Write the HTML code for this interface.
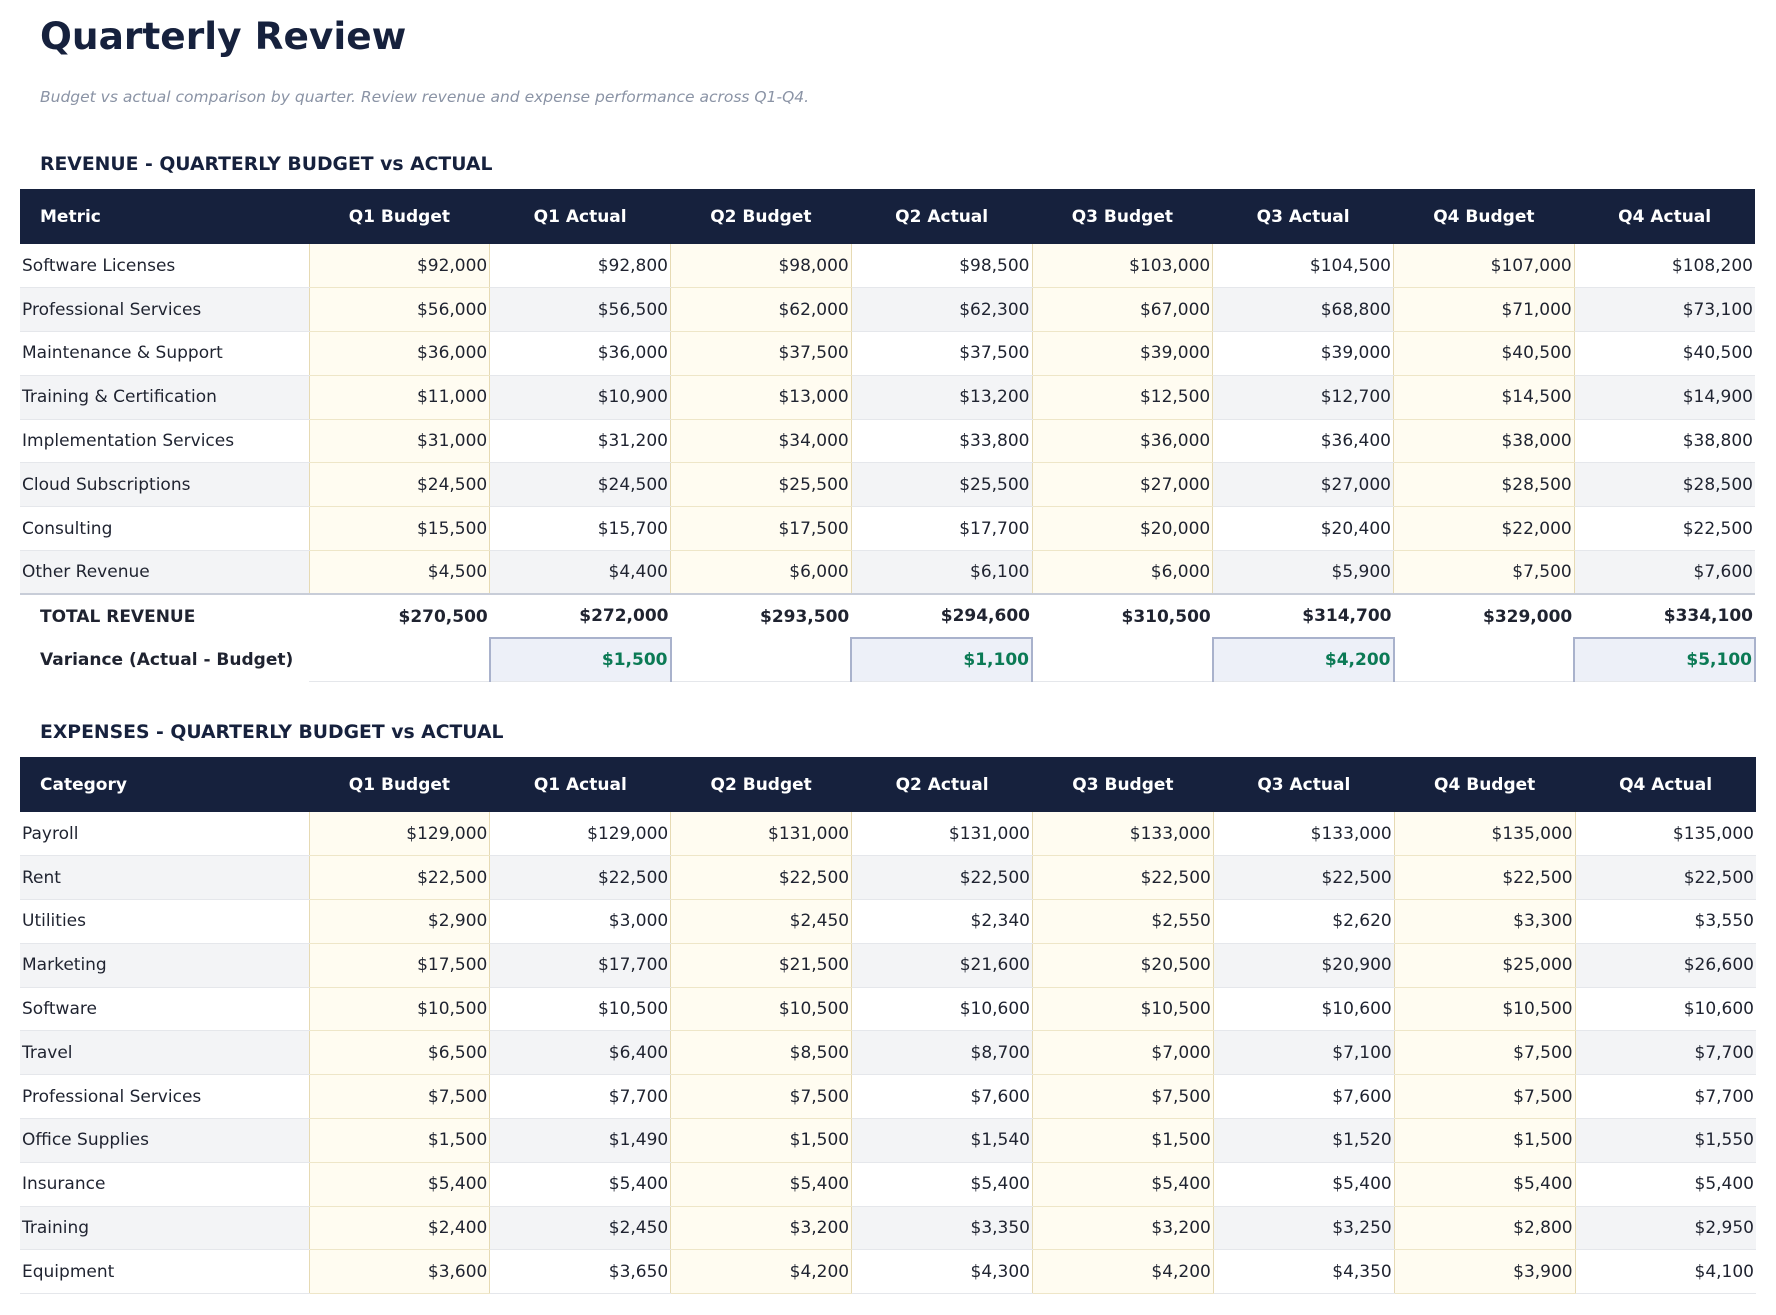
<!DOCTYPE html>
<html><head><meta charset="utf-8"><style>
*{box-sizing:border-box;margin:0;padding:0}
body{width:1776px;height:1315px;background:#fff;font-family:"DejaVu Sans","Liberation Sans",sans-serif;color:#1f2330;overflow:hidden}
h1{position:absolute;left:40px;top:11px;font-size:37.5px;font-weight:bold;color:#16213d;line-height:50px}
.sub{position:absolute;left:40px;top:88px;font-size:15.5px;font-style:italic;color:#8a93a5}
h2{position:absolute;left:40px;font-size:18.8px;font-weight:bold;color:#16213d;line-height:24px}
table{position:absolute;left:20px;width:1736px;border-collapse:collapse;table-layout:fixed;font-size:17px}
col.c0{width:289px}
th{background:#16213d;color:#fff;font-weight:bold;height:55px;text-align:center}
th:first-child{text-align:left;padding-left:20px}
td{height:43.8px;text-align:right;padding-right:2px;border-bottom:1px solid #e5e7eb;white-space:nowrap}
td:first-child{text-align:left;padding-left:2px}
tr.e td{background:#f3f4f6}
td.b{background:#fffcf1!important;border-left:1px solid #e6dab4;border-right:1px solid #e6dab4;border-bottom:1px solid #eee6c8}
tr.last td{border-bottom:2px solid #c8cdd8}
tr.tot td{font-weight:bold;border-bottom:none;background:#fff}
tr.tot td:first-child,tr.var td:first-child{padding-left:20px}
tr.var td{font-weight:bold;border-bottom:1px solid #e5e7eb}
td.v{background:#edf0f8;border:2px solid #a9b2cc;color:#0b7a55}
</style></head><body>
<h1>Quarterly Review</h1>
<div class="sub">Budget vs actual comparison by quarter. Review revenue and expense performance across Q1-Q4.</div>
<h2 style="top:153px">REVENUE - QUARTERLY BUDGET vs ACTUAL</h2>
<table style="top:189px">
<colgroup><col class="c0"><col><col><col><col><col><col><col><col></colgroup>
<tr><th>Metric</th><th>Q1 Budget</th><th>Q1 Actual</th><th>Q2 Budget</th><th>Q2 Actual</th><th>Q3 Budget</th><th>Q3 Actual</th><th>Q4 Budget</th><th>Q4 Actual</th></tr>
<tr><td>Software Licenses</td><td class="b">$92,000</td><td>$92,800</td><td class="b">$98,000</td><td>$98,500</td><td class="b">$103,000</td><td>$104,500</td><td class="b">$107,000</td><td>$108,200</td></tr>
<tr class="e"><td>Professional Services</td><td class="b">$56,000</td><td>$56,500</td><td class="b">$62,000</td><td>$62,300</td><td class="b">$67,000</td><td>$68,800</td><td class="b">$71,000</td><td>$73,100</td></tr>
<tr><td>Maintenance &amp; Support</td><td class="b">$36,000</td><td>$36,000</td><td class="b">$37,500</td><td>$37,500</td><td class="b">$39,000</td><td>$39,000</td><td class="b">$40,500</td><td>$40,500</td></tr>
<tr class="e"><td>Training &amp; Certification</td><td class="b">$11,000</td><td>$10,900</td><td class="b">$13,000</td><td>$13,200</td><td class="b">$12,500</td><td>$12,700</td><td class="b">$14,500</td><td>$14,900</td></tr>
<tr><td>Implementation Services</td><td class="b">$31,000</td><td>$31,200</td><td class="b">$34,000</td><td>$33,800</td><td class="b">$36,000</td><td>$36,400</td><td class="b">$38,000</td><td>$38,800</td></tr>
<tr class="e"><td>Cloud Subscriptions</td><td class="b">$24,500</td><td>$24,500</td><td class="b">$25,500</td><td>$25,500</td><td class="b">$27,000</td><td>$27,000</td><td class="b">$28,500</td><td>$28,500</td></tr>
<tr><td>Consulting</td><td class="b">$15,500</td><td>$15,700</td><td class="b">$17,500</td><td>$17,700</td><td class="b">$20,000</td><td>$20,400</td><td class="b">$22,000</td><td>$22,500</td></tr>
<tr class="e last"><td>Other Revenue</td><td class="b">$4,500</td><td>$4,400</td><td class="b">$6,000</td><td>$6,100</td><td class="b">$6,000</td><td>$5,900</td><td class="b">$7,500</td><td>$7,600</td></tr>
<tr class="tot"><td>TOTAL REVENUE</td><td>$270,500</td><td>$272,000</td><td>$293,500</td><td>$294,600</td><td>$310,500</td><td>$314,700</td><td>$329,000</td><td>$334,100</td></tr>
<tr class="var"><td style="border-bottom:none">Variance (Actual - Budget)</td><td></td><td class="v">$1,500</td><td></td><td class="v">$1,100</td><td></td><td class="v">$4,200</td><td></td><td class="v">$5,100</td></tr>
</table>
<h2 style="top:721px">EXPENSES - QUARTERLY BUDGET vs ACTUAL</h2>
<table style="top:757px">
<colgroup><col class="c0"><col><col><col><col><col><col><col><col></colgroup>
<tr><th>Category</th><th>Q1 Budget</th><th>Q1 Actual</th><th>Q2 Budget</th><th>Q2 Actual</th><th>Q3 Budget</th><th>Q3 Actual</th><th>Q4 Budget</th><th>Q4 Actual</th></tr>
<tr><td>Payroll</td><td class="b">$129,000</td><td>$129,000</td><td class="b">$131,000</td><td>$131,000</td><td class="b">$133,000</td><td>$133,000</td><td class="b">$135,000</td><td>$135,000</td></tr>
<tr class="e"><td>Rent</td><td class="b">$22,500</td><td>$22,500</td><td class="b">$22,500</td><td>$22,500</td><td class="b">$22,500</td><td>$22,500</td><td class="b">$22,500</td><td>$22,500</td></tr>
<tr><td>Utilities</td><td class="b">$2,900</td><td>$3,000</td><td class="b">$2,450</td><td>$2,340</td><td class="b">$2,550</td><td>$2,620</td><td class="b">$3,300</td><td>$3,550</td></tr>
<tr class="e"><td>Marketing</td><td class="b">$17,500</td><td>$17,700</td><td class="b">$21,500</td><td>$21,600</td><td class="b">$20,500</td><td>$20,900</td><td class="b">$25,000</td><td>$26,600</td></tr>
<tr><td>Software</td><td class="b">$10,500</td><td>$10,500</td><td class="b">$10,500</td><td>$10,600</td><td class="b">$10,500</td><td>$10,600</td><td class="b">$10,500</td><td>$10,600</td></tr>
<tr class="e"><td>Travel</td><td class="b">$6,500</td><td>$6,400</td><td class="b">$8,500</td><td>$8,700</td><td class="b">$7,000</td><td>$7,100</td><td class="b">$7,500</td><td>$7,700</td></tr>
<tr><td>Professional Services</td><td class="b">$7,500</td><td>$7,700</td><td class="b">$7,500</td><td>$7,600</td><td class="b">$7,500</td><td>$7,600</td><td class="b">$7,500</td><td>$7,700</td></tr>
<tr class="e"><td>Office Supplies</td><td class="b">$1,500</td><td>$1,490</td><td class="b">$1,500</td><td>$1,540</td><td class="b">$1,500</td><td>$1,520</td><td class="b">$1,500</td><td>$1,550</td></tr>
<tr><td>Insurance</td><td class="b">$5,400</td><td>$5,400</td><td class="b">$5,400</td><td>$5,400</td><td class="b">$5,400</td><td>$5,400</td><td class="b">$5,400</td><td>$5,400</td></tr>
<tr class="e"><td>Training</td><td class="b">$2,400</td><td>$2,450</td><td class="b">$3,200</td><td>$3,350</td><td class="b">$3,200</td><td>$3,250</td><td class="b">$2,800</td><td>$2,950</td></tr>
<tr><td>Equipment</td><td class="b">$3,600</td><td>$3,650</td><td class="b">$4,200</td><td>$4,300</td><td class="b">$4,200</td><td>$4,350</td><td class="b">$3,900</td><td>$4,100</td></tr>
</table>
</body></html>
